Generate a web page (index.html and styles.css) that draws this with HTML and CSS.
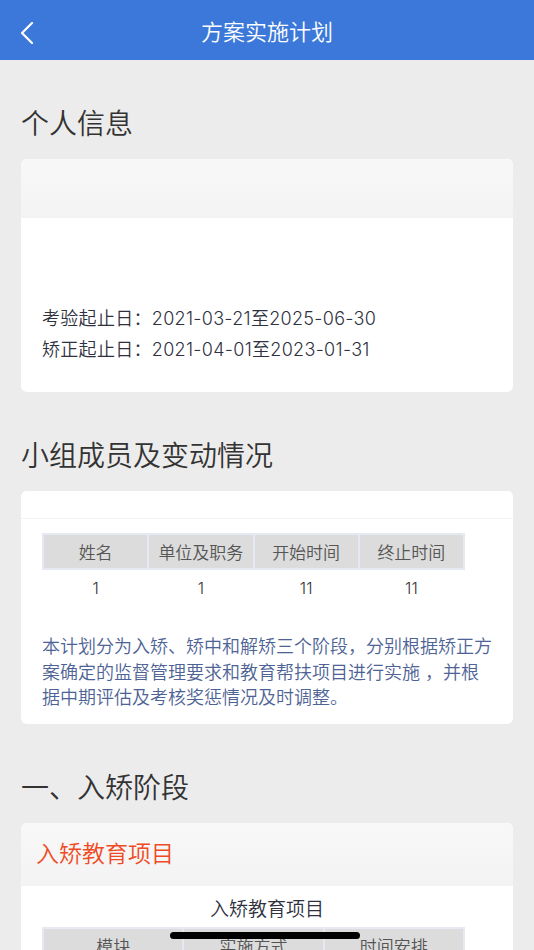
FILE: index.html
```html
<!DOCTYPE html>
<html lang="zh">
<head>
<meta charset="utf-8">
<title>方案实施计划</title>
<link rel="stylesheet" href="styles.css">
</head>
<body>
<header class="nav">
  <span class="back"><svg width="14" height="22" viewBox="0 0 14 22"><path d="M12 1 L2 11 L12 21" fill="none" stroke="#fff" stroke-width="2.2" stroke-linecap="round" stroke-linejoin="round"/></svg></span>
  <h1 class="nav-title">方案实施计划</h1>
</header>
<main class="page">
  <h2 class="sec-title">个人信息</h2>
  <section class="card">
    <div class="card-head"></div>
    <div class="card-body info">
      <p class="info-line">考验起止日：2021-03-21至2025-06-30</p>
      <p class="info-line">矫正起止日：2021-04-01至2023-01-31</p>
    </div>
  </section>

  <h2 class="sec-title">小组成员及变动情况</h2>
  <section class="card">
    <div class="card-head thin"></div>
    <div class="card-body members">
      <table class="grid">
        <thead><tr><th>姓名</th><th>单位及职务</th><th>开始时间</th><th>终止时间</th></tr></thead>
        <tbody><tr><td>1</td><td>1</td><td>11</td><td>11</td></tr></tbody>
      </table>
      <p class="note">本计划分为入矫、矫中和解矫三个阶段，分别根据矫正方案确定的监督管理要求和教育帮扶项目进行实施 ，并根据中期评估及考核奖惩情况及时调整。</p>
    </div>
  </section>

  <h2 class="sec-title">一、入矫阶段</h2>
  <section class="card">
    <div class="card-head red-head">入矫教育项目</div>
    <div class="card-body project">
      <div class="tbl-caption">入矫教育项目</div>
      <table class="grid three">
        <thead><tr><th>模块</th><th>实施方式</th><th>时间安排</th></tr></thead>
        <tbody><tr><td>入矫教育</td><td>集中教育</td><td>入矫后一个月内</td></tr></tbody>
      </table>
    </div>
  </section>
</main>
<div class="home-indicator"></div>
</body>
</html>
```

FILE: styles.css
```css
* { box-sizing: border-box; }
html, body { margin: 0; padding: 0; }
body {
  background: #ececec;
  font-family: "Inter", "Noto Sans CJK SC", sans-serif;
  font-weight: 350;
  color: #333;
}
.nav {
  height: 60px;
  background: #3b78d9;
  display: flex;
  align-items: center;
  justify-content: center;
  position: relative;
}
.back {
  position: absolute;
  left: 20px;
  top: 22px;
  width: 14px;
  height: 22px;
  display: block;
}
.back svg { display: block; }
.nav-title {
  margin: 0;
  color: #fff;
  font-size: 22px;
  font-weight: 350;
  line-height: 60px;
  padding-top: 4px;
}
.page { padding: 0 21px 40px; }
.sec-title {
  margin: 44px 0 15px;
  height: 40px;
  line-height: 40px;
  font-size: 28px;
  font-weight: 350;
  color: #333;
}
.card {
  background: #fff;
  border-radius: 6px;
  overflow: hidden;
}
.card-head {
  height: 59px;
  background: linear-gradient(#f8f8f8, #f3f3f3);
}
.card-head.thin {
  height: 28px;
  background: #fff;
  border-bottom: 1px solid #f4f4f4;
}
.card-head.red-head {
  height: 63px;
  line-height: 63px;
  padding-left: 15px;
  color: #f04a24;
  font-size: 23px;
}
.card-body { padding: 0 21px; }
.info { padding-top: 85px; padding-bottom: 27px; }
.info-line {
  margin: 0;
  font-size: 18px;
  line-height: 31px;
  letter-spacing: 0.3px;
  color: #2f3140;
}
.members { padding-top: 14px; padding-bottom: 13px; }
.grid {
  width: 94%;
  border-collapse: collapse;
  table-layout: fixed;
}
.grid th {
  background: #dcdcdc;
  border: 2px solid #e6e9f2;
  height: 35px;
  font-size: 17px;
  font-weight: 350;
  color: #555;
  padding: 0;
}
.grid td {
  text-align: center;
  font-size: 16px;
  color: #333;
  height: 36px;
  padding: 0;
}
.note {
  margin: 29px 0 0;
  font-size: 18px;
  line-height: 25.5px;
  color: #4e6395;
}
.project { padding-top: 12px; padding-bottom: 20px; }
.tbl-caption {
  text-align: center;
  font-size: 19px;
  line-height: 24px;
  color: #2f3140;
  margin-bottom: 5px;
}
.home-indicator {
  position: fixed;
  left: 170px;
  top: 932px;
  width: 190px;
  height: 7px;
  border-radius: 4px;
  background: #000;
}
```
